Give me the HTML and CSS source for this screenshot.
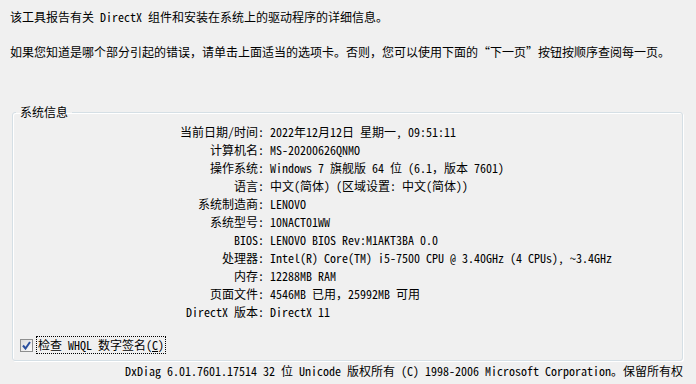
FILE: index.html
```html
<!DOCTYPE html>
<html lang="zh-CN">
<head>
    <meta charset="UTF-8">
    <title>DirectX 诊断工具</title>
    <link rel="stylesheet" href="styles.css">
</head>
<body>
    <div class="page">
        <p class="intro first">该工具报告有关 DirectX 组件和安装在系统上的驱动程序的详细信息。</p>
        <p class="intro">如果您知道是哪个部分引起的错误，请单击上面适当的选项卡。否则，您可以使用下面的“下一页”按钮按顺序查阅每一页。</p>

        <fieldset class="group">
            <legend>系统信息</legend>
            <div class="info">
                <span class="label">当前日期/时间:</span><span class="value">2022年12月12日 星期一, 09:51:11</span>
                <span class="label">计算机名:</span><span class="value">MS-20200626QNMO</span>
                <span class="label">操作系统:</span><span class="value">Windows 7 旗舰版 64 位 (6.1，版本 7601)</span>
                <span class="label">语言:</span><span class="value">中文(简体) (区域设置: 中文(简体))</span>
                <span class="label">系统制造商:</span><span class="value">LENOVO</span>
                <span class="label">系统型号:</span><span class="value">10NACT01WW</span>
                <span class="label">BIOS:</span><span class="value">LENOVO BIOS Rev:M1AKT3BA 0.0</span>
                <span class="label">处理器:</span><span class="value">Intel(R) Core(TM) i5-7500 CPU @ 3.40GHz (4 CPUs), ~3.4GHz</span>
                <span class="label">内存:</span><span class="value">12288MB RAM</span>
                <span class="label">页面文件:</span><span class="value">4546MB 已用，25992MB 可用</span>
                <span class="label">DirectX 版本:</span><span class="value">DirectX 11</span>
            </div>
            <label class="check">
                <span class="box">
                    <svg width="9" height="9" viewBox="0 0 9 9"><path d="M1 4.5 L3.5 7.5 L8 1" fill="none" stroke="#2a4f9e" stroke-width="2"/></svg>
                </span>
                <span class="check-text">检查 WHQL 数字签名(<u>C</u>)</span>
            </label>
        </fieldset>

        <p class="footer">DxDiag 6.01.7601.17514 32 位 Unicode 版权所有 (C) 1998-2006 Microsoft Corporation。保留所有权</p>
    </div>
</body>
</html>
```

FILE: styles.css
```css
body{
    margin: 0;
    background-color: #f0f0f0;
    color: #000;
    font-family: "SimSun", "Noto Sans Mono CJK SC", "Noto Sans CJK SC", monospace;
    font-size: 12px;
}
.page{
    width: 696px;
    height: 384px;
    overflow: hidden;
}
.intro{
    margin: 0;
    padding-left: 10px;
    line-height: 18px;
}
.intro.first{
    padding-top: 8px;
    margin-bottom: 17px;
}
.group{
    margin: 43px 0 0 12px;
    padding: 1px 0 0 0;
    width: 669px;
    height: 254px;
    border: 1px solid #d5dfe5;
    border-radius: 3px;
    box-shadow: inset 1px 1px 0 #fff, 1px 1px 0 #fff;
}
.group legend{
    margin-left: 3px;
    padding: 0 4px;
    line-height: 16px;
}
.info{
    display: grid;
    grid-template-columns: 251px auto;
    column-gap: 6px;
    grid-auto-rows: 18px;
    line-height: 18px;
    margin-top: 2px;
}
.label{
    text-align: right;
}
.check{
    display: flex;
    align-items: center;
    gap: 3px;
    margin: 15px 0 0 7px;
}
.box{
    width: 11px;
    height: 11px;
    border: 1px solid #8e8f8f;
    background: linear-gradient(135deg, #dcdcdc, #fbfbfb);
    display: flex;
    align-items: center;
    justify-content: center;
}
.check-text{
    border: 1px dotted #000;
    padding: 1px 1px;
    line-height: 14px;
}
.check-text u{
    text-decoration-thickness: 1px;
}
.footer{
    margin: 1px 13px 0 0;
    text-align: right;
    line-height: 18px;
    white-space: nowrap;
}
```
